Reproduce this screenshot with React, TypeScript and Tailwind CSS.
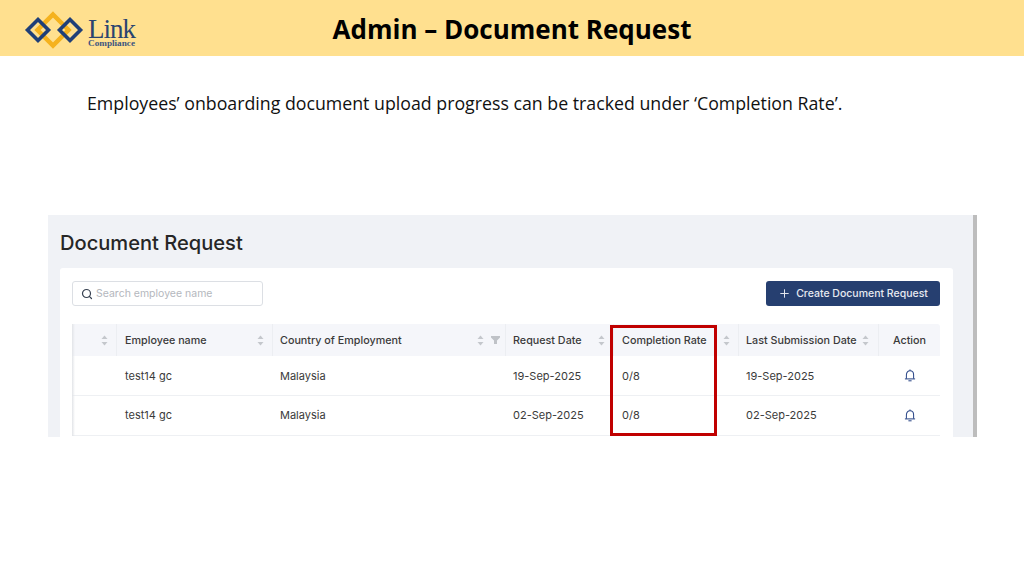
import { Plus, Search } from 'lucide-react'

const cols = 'grid grid-cols-[45px_156px_233px_108px_125px_140px_61px]'

const rows = [
  { name: 'test14 gc', country: 'Malaysia', date: '19-Sep-2025', rate: '0/8', last: '19-Sep-2025' },
  { name: 'test14 gc', country: 'Malaysia', date: '02-Sep-2025', rate: '0/8', last: '02-Sep-2025' },
]

function Sort() {
  return (
    <svg width="7" height="11" viewBox="0 0 7 11" className="shrink-0 fill-[#c4c7cc]">
      <path d="M3.5 0.5 L6.5 4 H0.5 Z" />
      <path d="M3.5 10.5 L6.5 7 H0.5 Z" />
    </svg>
  )
}

function Funnel() {
  return (
    <svg width="9" height="8" viewBox="0 0 9 8" className="shrink-0 fill-[#bfc2c7]">
      <path d="M0 0 H9 V1.5 L6 4.5 V8 H3 V4.5 L0 1.5 Z" />
    </svg>
  )
}

function BellIcon() {
  return (
    <svg width="12" height="13" viewBox="0 0 12 13" fill="none" stroke="#2f4a8a" strokeWidth="1.05" className="shrink-0">
      <path d="M6 0.4 V1.8" />
      <path d="M2.4 9.8 V5.8 C2.4 3.4 4 1.8 6 1.8 C8 1.8 9.6 3.4 9.6 5.8 V9.8" />
      <path d="M0.9 9.9 H11.1" />
      <path d="M4.4 11.8 H7.6" />
    </svg>
  )
}

function Logo() {
  return (
    <div className="flex items-center pl-[24px] pt-[4px]">
      <svg width="60" height="40" viewBox="0 0 60 40" className="shrink-0">
        <path d="M29 4.5 L44.5 20 L29 35.5 L13.5 20 Z" fill="none" stroke="#f5b21e" strokeWidth="4.5" />
        <path d="M14 9.5 L24.5 20 L14 30.5 L3.5 20 Z" fill="none" stroke="#1f3f78" strokeWidth="3.6" />
        <path d="M46 9.5 L56.5 20 L46 30.5 L35.5 20 Z" fill="none" stroke="#1f3f78" strokeWidth="3.6" />
      </svg>
      <div className="ml-[4px] pt-[4px] flex flex-col font-['Liberation_Serif',serif] text-[#2a4470]">
        <span className="text-[27px] leading-[24px] tracking-[-1px]">Link</span>
        <span className="mt-[-3px] text-[9.2px] leading-[10px] font-bold text-[#3d5580]">Compliance</span>
      </div>
    </div>
  )
}

function HeadCell({ label, pad, endPad = 'pr-[8px]', filter = false }: { label: string; pad: string; endPad?: string; filter?: boolean }) {
  return (
    <div className={`flex items-center justify-between border-r border-[#eceef2] ${pad} ${endPad}`}>
      <span className="whitespace-nowrap pt-[2px]">{label}</span>
      <span className="flex items-center gap-[7px]">
        <Sort />
        {filter && <Funnel />}
      </span>
    </div>
  )
}

export default function App() {
  return (
    <div className="w-[1024px] h-[576px] bg-white overflow-hidden relative">
      <header className="h-[56px] bg-[#ffe08f] grid grid-cols-[1fr_auto_1fr] items-center">
        <Logo />
        <h1 className="font-['Open_Sans',sans-serif] font-bold text-[26px] text-black whitespace-nowrap pt-[3px]">Admin – Document Request</h1>
        <div />
      </header>

      <p className="pl-[87px] pt-[34px] font-['Open_Sans',sans-serif] text-[17.75px] leading-[26px] text-[#111] whitespace-nowrap">
        Employees’ onboarding document upload progress can be tracked under ‘Completion Rate’.
      </p>

      <section className="relative mt-[99px] ml-[48px] w-[929px] h-[222px] bg-[#f0f2f6] overflow-hidden border-r-4 border-[#bdbdbd] font-['Inter',sans-serif]">
        <h2 className="pl-[12px] pt-[14px] h-[53px] text-[20.1px] leading-[28px] font-medium text-[#262626]">Document Request</h2>

        <div className="ml-[12px] w-[893px] h-[170px] bg-white rounded-t-[3px] pl-[12px] pr-[13px] pt-[13px]">
          <div className="flex justify-between">
            <div className="w-[191px] h-[25px] border border-[#dcdfe4] rounded-[3px] flex items-center pl-[8px] gap-[3px] text-[10.5px] text-[#b4b7bd]">
              <Search size={12} strokeWidth={2.4} className="text-[#374151]" />
              <span>Search employee name</span>
            </div>
            <button className="w-[174px] h-[25px] bg-[#263f70] rounded-[3px] flex items-center justify-center gap-[5px] text-[10.5px] font-medium text-[#e6e9f0]">
              <Plus size={13} strokeWidth={1.8} />
              <span>Create Document Request</span>
            </button>
          </div>

          <div className="relative mt-[18px] text-[10.75px] text-[#3a3a3a]">
            <div className="absolute left-0 top-0 bottom-0 w-[3px] bg-gradient-to-r from-[#e2e4e8] to-transparent" />
            <div className={`${cols} h-[32px] bg-[#f5f6fa] rounded-t-[3px] font-medium`}>
              <div className="flex items-center justify-end pr-[8px] border-r border-[#eceef2]"><Sort /></div>
              <HeadCell label="Employee name" pad="pl-[8px]" />
              <HeadCell label="Country of Employment" pad="pl-[7px]" endPad="pr-[5px]" filter />
              <HeadCell label="Request Date" pad="pl-[7px]" />
              <HeadCell label="Completion Rate" pad="pl-[8px]" />
              <HeadCell label="Last Submission Date" pad="pl-[7px]" endPad="pr-[9px]" />
              <div className="flex items-center justify-center pt-[2px]">Action</div>
            </div>
            {rows.map((r, i) => (
              <div key={i} className={`${cols} h-[39.5px] last:h-[40px] items-center border-b border-[#eef0f3] pt-[1px] text-[11px]`}>
                <div />
                <div className="pl-[8px]">{r.name}</div>
                <div className="pl-[7px]">{r.country}</div>
                <div className="pl-[7px]">{r.date}</div>
                <div className="pl-[8px]">{r.rate}</div>
                <div className="pl-[7px]">{r.last}</div>
                <div className="flex justify-center"><BellIcon /></div>
              </div>
            ))}
          </div>
        </div>
      </section>

      <div className="absolute left-[610px] top-[325px] w-[107px] h-[111px] border-[3px] border-[#c00000]" />
    </div>
  )
}
